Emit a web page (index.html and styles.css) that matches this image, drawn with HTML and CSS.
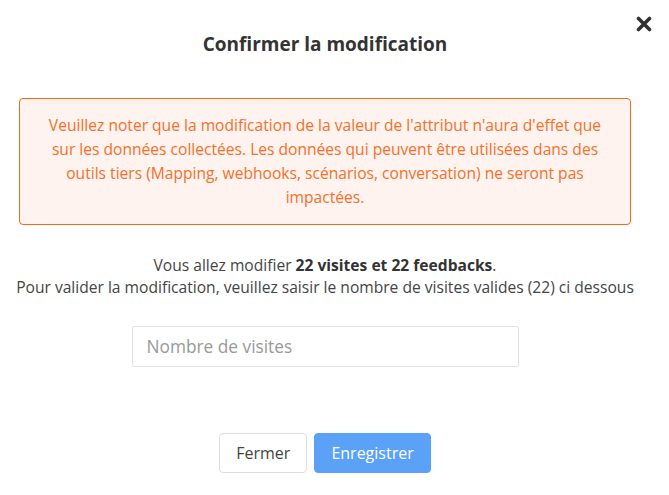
FILE: index.html
```html
<!DOCTYPE html>
<html lang="fr">
<head>
<meta charset="utf-8">
<link rel="stylesheet" href="styles.css">
</head>
<body>
<div class="modal">
  <button class="close" aria-label="Fermer">
    <svg width="16" height="16" viewBox="0 0 16 16"><path d="M2.5 2.5 L13.5 13.5 M13.5 2.5 L2.5 13.5" stroke="#333" stroke-width="3.6" stroke-linecap="round"/></svg>
  </button>
  <h1 class="title">Confirmer la modification</h1>
  <div class="warning">Veuillez noter que la modification de la valeur de l'attribut n'aura d'effet que sur les données collectées. Les données qui peuvent être utilisées dans des outils tiers (Mapping, webhooks, scénarios, conversation) ne seront pas impactées.</div>
  <p class="info">Vous allez modifier <strong>22 visites et 22 feedbacks</strong>.<br>Pour valider la modification, veuillez saisir le nombre de visites valides (22) ci dessous</p>
  <div class="field"><input class="input" type="text" placeholder="Nombre de visites"></div>
  <div class="actions">
    <button class="btn btn-default">Fermer</button>
    <button class="btn btn-primary">Enregistrer</button>
  </div>
</div>
</body>
</html>
```
FILE: styles.css
```css
html, body {
  margin: 0;
  padding: 0;
  background: #fff;
  font-family: "Open Sans", sans-serif;
}
.modal {
  position: relative;
  width: 650px;
  padding-top: 31px;
}
.close {
  position: absolute;
  top: 16px;
  left: 636px;
  border: 0;
  background: none;
  padding: 0;
  width: 16px;
  height: 16px;
  cursor: pointer;
}
.close svg { display: block; }
.title {
  margin: 0;
  text-align: center;
  font-size: 19px;
  font-weight: 700;
  color: #333;
  line-height: 26px;
}
.warning {
  margin: 41px 19px 0 19px;
  border: 1px solid #f26b1d;
  border-radius: 4px;
  background: #fef3ef;
  color: #f4702a;
  font-size: 15.6px;
  line-height: 24px;
  text-align: center;
  padding: 14px 28px 15px;
}
.info {
  margin: 29px 0 0 0;
  text-align: center;
  font-size: 15.6px;
  line-height: 22px;
  color: #444;
}
.info strong { color: #333; }
.field {
  display: flex;
  justify-content: center;
  margin-top: 28px;
}
.input {
  box-sizing: border-box;
  width: 387px;
  height: 41px;
  border: 1px solid #e3e3e3;
  border-radius: 2px;
  padding: 0 14px;
  font-family: "Open Sans", sans-serif;
  font-size: 17.3px;
  color: #333;
  outline: none;
}
.input::placeholder { color: #999; }
.actions {
  display: flex;
  justify-content: center;
  gap: 7px;
  margin-top: 66px;
}
.btn {
  box-sizing: border-box;
  height: 40px;
  padding: 0 16px;
  border-radius: 4px;
  font-family: "Open Sans", sans-serif;
  font-size: 16px;
  cursor: pointer;
}
.btn-default {
  background: #fff;
  border: 1px solid #dedede;
  color: #444;
}
.btn-primary {
  background: #5aa1f7;
  border: 1px solid #5aa1f7;
  color: #fff;
}
```
